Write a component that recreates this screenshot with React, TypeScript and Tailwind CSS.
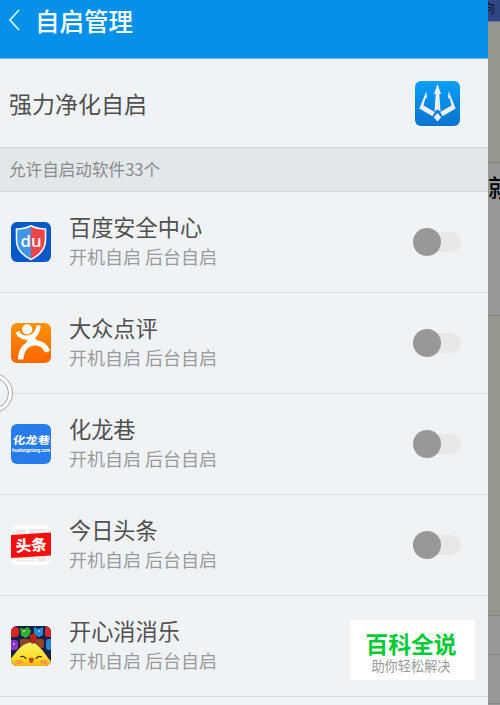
import React from "react";

const FONT = "font-['Noto_Sans_CJK_SC',sans-serif]";

interface AppItem {
  name: string;
  icon: React.ReactNode;
  hasToggle: boolean;
}

const BaiduIcon = () => (
  <svg viewBox="0 0 40 40" className="h-10 w-10">
    <rect width="40" height="40" rx="6" fill="#0559c9" />
    <path d="M20 3.500C16 6 11 7 5.500 7V18C5.500 27 11 33.500 20 38Z" fill="#4294e8" />
    <path d="M20 3.500C24 6 29 7 34.500 7V18C34.500 27 29 33.500 20 38Z" fill="#f04346" />
    <path d="M20 3.800C16 6 11 7 5.500 7V18C5.500 27 11 33 20 37.500C29 33 34.500 27 34.500 18V7C29 7 24 6 20 3.800Z" fill="none" stroke="#f4f6fb" strokeWidth="1.600" />
    <text x="9.500" y="24.500" fontSize="16.500" fontWeight="600" fontFamily="Open Sans, sans-serif" fill="#fff" textLength="21" lengthAdjust="spacingAndGlyphs">du</text>
  </svg>
);

const DianpingIcon = () => (
  <svg viewBox="0 0 40 40" className="h-10 w-10">
    <defs>
      <linearGradient id="dp" x1="0" y1="0" x2="0" y2="1">
        <stop offset="0" stopColor="#ff9200" />
        <stop offset="1" stopColor="#ff6500" />
      </linearGradient>
    </defs>
    <rect width="40" height="40" rx="6" fill="url(#dp)" />
    <path d="M4.300 9.500L8.200 7.800C10 12 13.500 13 17 12.500C22 11.500 25 7.500 25.500 2.500H29.600C29.500 8 27.500 12 24 15L26 17.500C32 18 37.500 22 39 28L33.800 29.500C32 25 28.500 22.500 24 22.500C17 22.500 12.800 28 12.500 36.500H7C7 28.500 10 22.500 16.500 19L15.500 16.800C10.500 16.500 6.500 14 4.300 9.500Z" fill="#fff" />
    <circle cx="16.200" cy="6.300" r="5.100" fill="#fff" />
  </svg>
);

const HualongIcon = () => (
  <svg viewBox="0 0 40 40" className="h-10 w-10">
    <rect width="40" height="40" rx="6" fill="#287bed" />
    <g transform="translate(1.500 20.300) skewX(-6) scale(1 .85)">
      <text x="0" y="0" fontSize="12.500" fontWeight="700" fontFamily="Noto Sans CJK SC, sans-serif" fill="#fff" textLength="37" lengthAdjust="spacingAndGlyphs">化龙巷</text>
    </g>
    <text x="1" y="27.500" fontSize="4.800" fontWeight="700" fontFamily="Open Sans, sans-serif" fill="#fff" textLength="38" lengthAdjust="spacingAndGlyphs">hualongxiang.com</text>
  </svg>
);

const ToutiaoIcon = () => (
  <svg viewBox="0 0 40 40" className="h-10 w-10">
    <rect width="40" height="40" rx="7" fill="#fdfdfd" />
    <g fill="#e9e9e9">
      <path d="M5 4H14V10H5ZM18 4H35V6H18ZM18 7H35V10H18Z" />
      <path d="M5 32H24V34H5ZM5 35H24V36.500H5ZM27 30H35V36.500H27Z" />
    </g>
    <path d="M0 10L40 7.500V30.500L0 33Z" fill="#fb0d0d" />
    <text x="20" y="26" textAnchor="middle" fontSize="15.500" fontWeight="900" fontFamily="Noto Sans CJK SC, sans-serif" fill="#fff" transform="rotate(-4 20 20)">头条</text>
  </svg>
);

const PopIcon = () => (
  <svg viewBox="0 0 40 40" className="h-10 w-10">
    <defs>
      <clipPath id="popClip"><rect width="40" height="40" rx="6" /></clipPath>
      <linearGradient id="chick" x1="0" y1="0" x2="0" y2="1">
        <stop offset="0" stopColor="#fff36a" />
        <stop offset=".65" stopColor="#ffdc20" />
        <stop offset="1" stopColor="#f8a510" />
      </linearGradient>
    </defs>
    <g clipPath="url(#popClip)">
      <rect width="40" height="40" fill="#182047" />
      <rect x="-3" y="1" width="11" height="10" rx="4" fill="#d7262a" />
      <path d="M9 2L13 3L17 1L20 5L18 10L14 12L10 9Z" fill="#38ad37" />
      <path d="M23 1L27 3L32 1V9L28 11L23 8Z" fill="#278bd4" />
      <rect x="34" y="0" width="9" height="11" rx="3" fill="#d52831" />
      <rect x="-2" y="14" width="9" height="10" rx="3" fill="#8b37c8" />
      <rect x="9" y="13" width="10" height="9" rx="2" fill="#8b4426" />
      <rect x="24" y="13" width="9" height="9" rx="2" fill="#974421" />
      <rect x="35" y="13" width="8" height="11" rx="3" fill="#2788d2" />
      <circle cx="13" cy="5" r="1" fill="#b9ef74" />
      <circle cx="28" cy="5" r="1" fill="#8bd9fa" />
      <circle cx="3" cy="18" r="1" fill="#dda5ff" />
      <path d="M-2 42V35Q2 30 6 25Q12 18 17 17Q22 15 26 19Q32 24 35 29Q38 34 42 37V42Z" fill="url(#chick)" />
      <path d="M20 17C20 15 18 12 19 10C20 8 22 7 24 8C27 9 26 12 25 14C24 15 23 16 22 18Z" fill="#bd2319" />
      <path d="M9.500 31Q13 29 15 33M25 33Q27 29 31 31" fill="none" stroke="#482010" strokeWidth="1.300" />
      <path d="M17.500 32.500Q20.500 31 23 32.500Q22 37 20.500 37Q18.500 37 17.500 32.500Z" fill="#c9431a" />
      <ellipse cx="8" cy="36" rx="4" ry="2" fill="#f89c3e" />
      <ellipse cx="33" cy="36" rx="4" ry="2" fill="#f89c3e" />
    </g>
  </svg>
);

const TridentIcon = () => (
  <svg viewBox="0 0 45 45" className="h-[45px] w-[45px]">
    <defs>
      <linearGradient id="trident" x1="0" y1="0" x2="0" y2="1">
        <stop offset="0" stopColor="#0aa0fb" />
        <stop offset="1" stopColor="#0874cf" />
      </linearGradient>
    </defs>
    <rect width="45" height="45" rx="6" fill="url(#trident)" />
    <g fill="#eef0fb">
      <path d="M22.500 3L26 13H24.300L25.500 30.500L22.500 28.500L19.500 30.500L20.700 13H19Z" />
      <path d="M11.300 10L12 17.500L10.500 17L8.500 24.500L19.800 31L17.500 35.300L4.300 27.500L9 16Z" />
      <path d="M33.700 10L33 17.500L34.500 17L36.500 24.500L25.200 31L27.500 35.300L40.700 27.500L36 16Z" />
      <path d="M22.500 32L26.300 36.300L22.500 40.500L18.700 36.300Z" />
    </g>
  </svg>
);

const APPS: AppItem[] = [
  { name: "百度安全中心", icon: <BaiduIcon />, hasToggle: true },
  { name: "大众点评", icon: <DianpingIcon />, hasToggle: true },
  { name: "化龙巷", icon: <HualongIcon />, hasToggle: true },
  { name: "今日头条", icon: <ToutiaoIcon />, hasToggle: true },
  { name: "开心消消乐", icon: <PopIcon />, hasToggle: false },
];

const Toggle = () => (
  <div className="isolate flex w-12 items-center">
    <div className="z-10 h-7 w-7 shrink-0 rounded-full bg-[#989898]" />
    <div className="-ml-4 h-5 w-9 rounded-full bg-[#e8e8e8]" />
  </div>
);

const AppRow: React.FC<{ item: AppItem }> = ({ item }) => (
  <article className="flex h-[101px] shrink-0 items-center border-b border-[#d9dee1] pl-[11px] pr-[27px]">
    {item.icon}
    <div className="ml-[18px] flex-1 pb-[3px] text-[#505050]">
      <h2 className="text-[22.200px] leading-8">{item.name}</h2>
      <p className="text-[18px] leading-[29px] text-[#999b9c]">开机自启 后台自启</p>
    </div>
    {item.hasToggle && <Toggle />}
  </article>
);

const App = () => (
  <main className={`relative flex h-[705px] w-[500px] overflow-hidden ${FONT}`}>
    <div className="flex w-[488px] shrink-0 flex-col overflow-hidden bg-[#eff3f6]">
      <header className="flex h-[59px] shrink-0 border-b border-[#68bcf3] bg-[#0591eb] pl-[9px] text-white">
        <svg viewBox="0 0 11 22" className="mt-[9px] h-[22px] w-[11px]" fill="none" stroke="#d9f0ff" strokeWidth="1.700">
          <path d="M10 1L1 11L10 21" />
        </svg>
        <h1 className="ml-[15px] mt-[5px] text-[24.500px] font-medium leading-8">自启管理</h1>
      </header>
      <section className="flex h-[88px] shrink-0 items-center justify-between pl-[9px] pr-7">
        <span className="text-[23px] leading-8 text-[#505050]">强力净化自启</span>
        <TridentIcon />
      </section>
      <div className="flex h-[45px] shrink-0 items-center border-y border-[#d3d8da] bg-[#e2e7ea] pl-[9px] text-[16.600px] text-[#898b8c]">允许自启动软件33个</div>
      {APPS.map((item) => (
        <AppRow key={item.name} item={item} />
      ))}
    </div>

    {/* dimmed page behind the panel */}
    <aside className="flex w-3 shrink-0 flex-col overflow-hidden bg-[#979797]">
      <div className="flex h-[22px] shrink-0 justify-end overflow-hidden border-b border-[#6679a0] bg-[#304783] text-[12px] font-medium leading-4 text-[#131b30]">
        <span className="mr-[5px] shrink-0">向</span>
      </div>
      <div className="h-[141px] shrink-0 border-b border-[#858585] bg-[#96968e]" />
      <div className="flex h-[153px] shrink-0 overflow-hidden border-b border-[#808080] pt-2 text-[24px] font-medium leading-8 text-black">
        <span className="shrink-0">就</span>
      </div>
      <div className="h-[300px] shrink-0 border-b border-[#858585] bg-[#96968e]" />
      <div className="h-[39px] shrink-0 border-b border-[#858585]" />
      <div className="h-[49px] shrink-0 border-b border-[#858585]" />
    </aside>

    <div className="absolute -left-[27px] top-[373px] h-10 w-10 rounded-full border border-[#a6a6a6] bg-white p-[3px]">
      <div className="h-full w-full rounded-full border border-[#a6a6a6] bg-[#eff3f6]" />
    </div>

    <div className="absolute left-[350px] top-[620px] z-20 flex h-[60px] w-[125px] flex-col items-center bg-white pr-[3px]">
      <strong className="mt-[9px] text-[22.800px] font-bold leading-[30px] text-[#00cb35]">百科全说</strong>
      <span className="text-[13.200px] leading-[14px] text-[#999]">助你轻松解决</span>
    </div>
  </main>
);

export default App;
